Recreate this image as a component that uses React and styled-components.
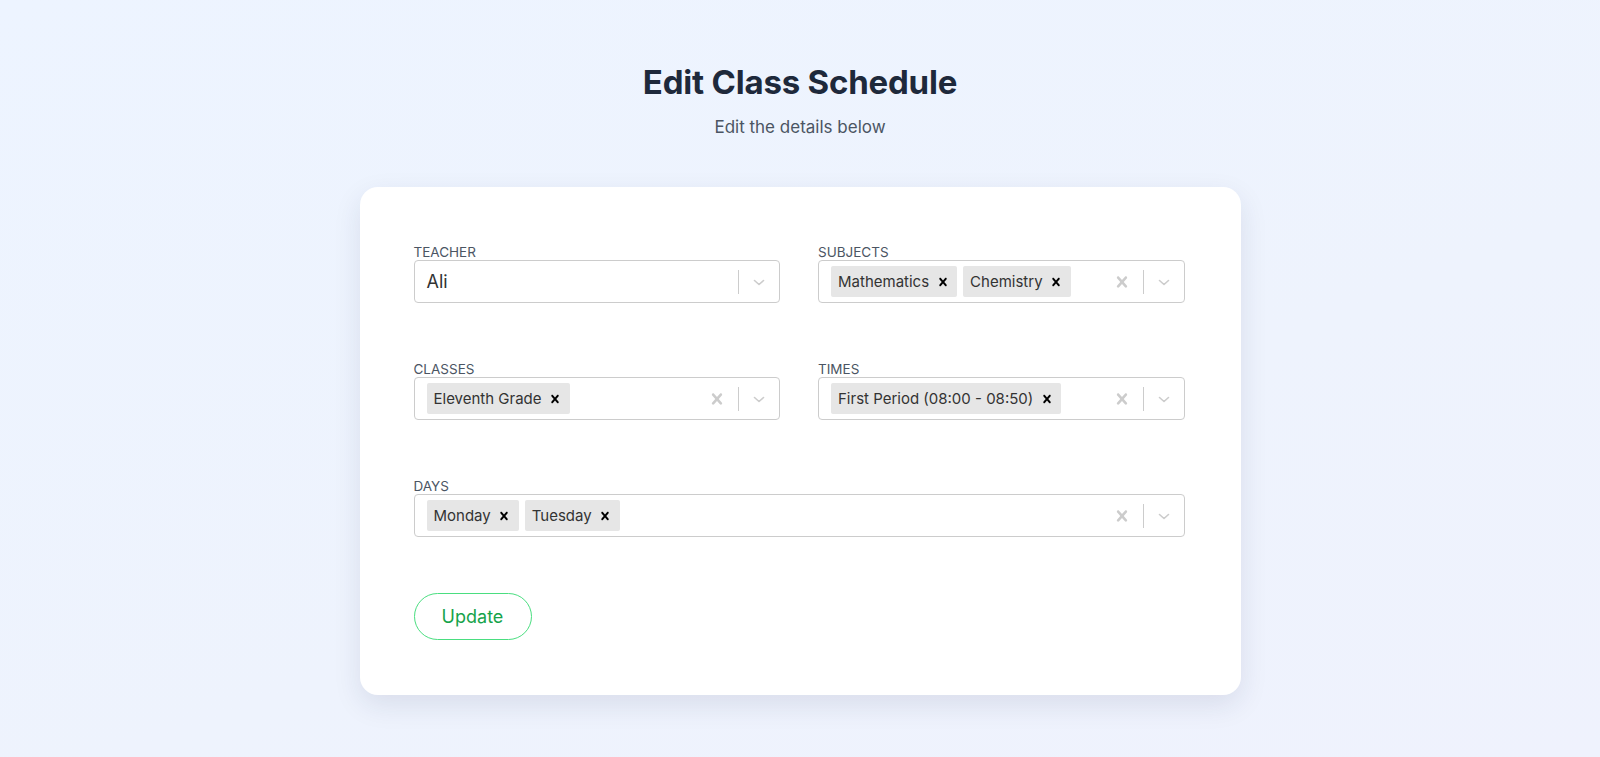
import React from "react";
import styled, { createGlobalStyle } from "styled-components";

const GlobalStyle = createGlobalStyle`
  * { box-sizing: border-box; }
  body {
    margin: 0;
    font-family: Inter, "Noto Sans", sans-serif;
    background: linear-gradient(160deg, #edf4ff 0%, #eef3fd 60%, #eff2fd 100%);
    min-height: 757px;
  }
`;

const Page = styled.main`
  min-height: 757px;
  display: flex;
  flex-direction: column;
  align-items: center;
  padding-top: 60px;
`;

const Title = styled.h1`
  margin: 0;
  font-size: 33px;
  line-height: 44px;
  font-weight: 700;
  color: #1e293b;
  letter-spacing: -0.2px;
`;

const Subtitle = styled.p`
  margin: 11px 0 0;
  font-size: 17px;
  line-height: 24px;
  color: #4b5563;
`;

const Card = styled.section`
  margin-top: 48px;
  width: 881px;
  background: #fff;
  border-radius: 18px;
  padding: 57px 56px 55px 54px;
  box-shadow: 0 10px 28px rgba(30, 41, 80, 0.1);
`;

const Grid = styled.div`
  display: grid;
  grid-template-columns: 1fr 1fr;
  column-gap: 38px;
  row-gap: 58px;
`;

const Field = styled.div`
  display: flex;
  flex-direction: column;
  grid-column: ${(p) => (p.$wide ? "1 / -1" : "auto")};
`;

const Label = styled.label`
  font-size: 13.5px;
  line-height: 16px;
  color: #4b5563;
  text-transform: uppercase;
`;

const Control = styled.div`
  display: flex;
  align-items: center;
  height: 43px;
  border: 1px solid #cccccc;
  border-radius: 4px;
  background: #fff;
`;

const Values = styled.div`
  flex: 1;
  display: flex;
  align-items: center;
  gap: 6px;
  padding: 0 12px;
  min-width: 0;
`;

const SingleValue = styled.span`
  font-size: 18px;
  color: #333;
`;

const Chip = styled.span`
  display: inline-flex;
  align-items: center;
  height: 31px;
  background: #e6e6e6;
  border-radius: 2px;
  font-size: 15px;
  color: #333;
  padding-left: 7px;
`;

const ChipRemove = styled.span`
  display: inline-flex;
  align-items: center;
  justify-content: center;
  width: 25px;
  height: 100%;
  margin-left: 3px;
  padding-right: 4px;
  color: #000;
`;

const Indicators = styled.div`
  display: flex;
  align-items: center;
  height: 100%;
`;

const IconBox = styled.span`
  display: inline-flex;
  padding: 8px 10px;
  color: #cccccc;
`;

const Separator = styled.span`
  width: 1px;
  height: 24px;
  background: #cccccc;
`;

const Button = styled.button`
  margin-top: 56px;
  width: 118px;
  height: 47px;
  border-radius: 999px;
  border: 1px solid #4ade80;
  background: #fff;
  color: #16a34a;
  font-family: inherit;
  font-size: 18px;
  cursor: pointer;
`;

const crossPath =
  "M14.348 14.849c-0.469 0.469-1.229 0.469-1.697 0l-2.651-3.030-2.651 3.029c-0.469 0.469-1.229 0.469-1.697 0-0.469-0.469-0.469-1.229 0-1.697l2.758-3.15-2.759-3.152c-0.469-0.469-0.469-1.228 0-1.697s1.228-0.469 1.697 0l2.652 3.031 2.651-3.031c0.469-0.469 1.228-0.469 1.697 0s0.469 1.229 0 1.697l-2.758 3.152 2.758 3.15c0.469 0.469 0.469 1.229 0 1.698z";

const Cross = ({ size = 20 }) => (
  <svg width={size} height={size} viewBox="0 0 20 20" fill="currentColor">
    <path d={crossPath} />
  </svg>
);

const Chevron = () => (
  <svg width="20" height="20" viewBox="0 0 20 20" fill="none" stroke="currentColor" strokeWidth="1.6" strokeLinecap="round" strokeLinejoin="round">
    <path d="M5.5 8.5 L10 12.5 L14.5 8.5" />
  </svg>
);

const Select = ({ value, chips }) => (
  <Control>
    <Values>
      {value && <SingleValue>{value}</SingleValue>}
      {chips &&
        chips.map((c) => (
          <Chip key={c}>
            {c}
            <ChipRemove>
              <Cross size={16} />
            </ChipRemove>
          </Chip>
        ))}
    </Values>
    <Indicators>
      {chips && (
        <IconBox>
          <Cross size={22} />
        </IconBox>
      )}
      <Separator />
      <IconBox>
        <Chevron />
      </IconBox>
    </Indicators>
  </Control>
);

const App = () => (
  <>
    <GlobalStyle />
    <Page>
      <Title>Edit Class Schedule</Title>
      <Subtitle>Edit the details below</Subtitle>
      <Card>
        <Grid>
          <Field>
            <Label>Teacher</Label>
            <Select value="Ali" />
          </Field>
          <Field>
            <Label>Subjects</Label>
            <Select chips={["Mathematics", "Chemistry"]} />
          </Field>
          <Field>
            <Label>Classes</Label>
            <Select chips={["Eleventh Grade"]} />
          </Field>
          <Field>
            <Label>Times</Label>
            <Select chips={["First Period (08:00 - 08:50)"]} />
          </Field>
          <Field $wide>
            <Label>Days</Label>
            <Select chips={["Monday", "Tuesday"]} />
          </Field>
        </Grid>
        <Button>Update</Button>
      </Card>
    </Page>
  </>
);

export default App;
